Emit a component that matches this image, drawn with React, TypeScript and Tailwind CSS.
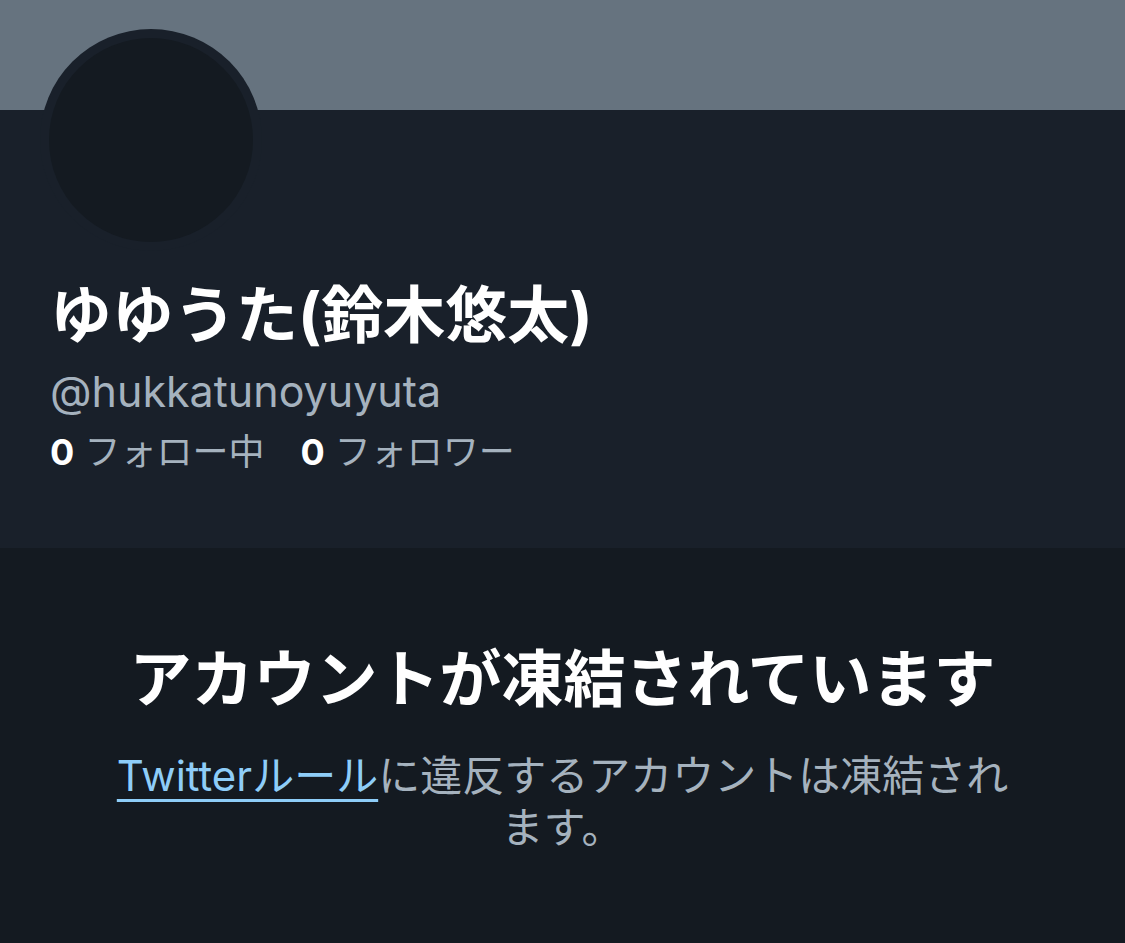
const font = "font-['Inter','Noto_Sans_CJK_JP',sans-serif]";

export default function App() {
  return (
    <div className={`w-[1125px] h-[943px] overflow-hidden bg-[#141a21] ${font}`}>
      <div className="h-[110px] bg-[#66737f]" />
      <section className="flex h-[438px] flex-col bg-[#19202a] px-[50px]">
        <div className="-mt-[81px] -ml-[10px] w-[222px] h-[222px] shrink-0 rounded-full bg-[#19202a] p-[9px]">
          <div className="w-full h-full rounded-full bg-[#141a21]" />
        </div>
        <h1 className="mt-[29px] text-[62px] leading-[72px] font-bold text-white">
          ゆゆうた(鈴木悠太)
        </h1>
        <p className="mt-[13px] text-[43px] leading-[52px] text-[#a5b2be]">@hukkatunoyuyuta</p>
        <div className="mt-[13px] flex items-center gap-[36px] text-[36px] leading-[44px] text-[#a5b2be]">
          <span>
            <span className="font-bold text-white">0</span> フォロー中
          </span>
          <span>
            <span className="font-bold text-white">0</span> フォロワー
          </span>
        </div>
      </section>
      <section className="flex flex-col items-center pt-[96px] text-center">
        <h2 className="text-[62px] leading-[72px] font-bold text-white">アカウントが凍結されています</h2>
        <p className="mt-[34px] w-[905px] text-[42px] leading-[52px] text-[#a5b2be]">
          <a href="#" className="text-[#8ecdf8] underline underline-offset-[8px] decoration-[3px]">
            Twitterルール
          </a>
          に違反するアカウントは凍結されます。
        </p>
      </section>
    </div>
  );
}
